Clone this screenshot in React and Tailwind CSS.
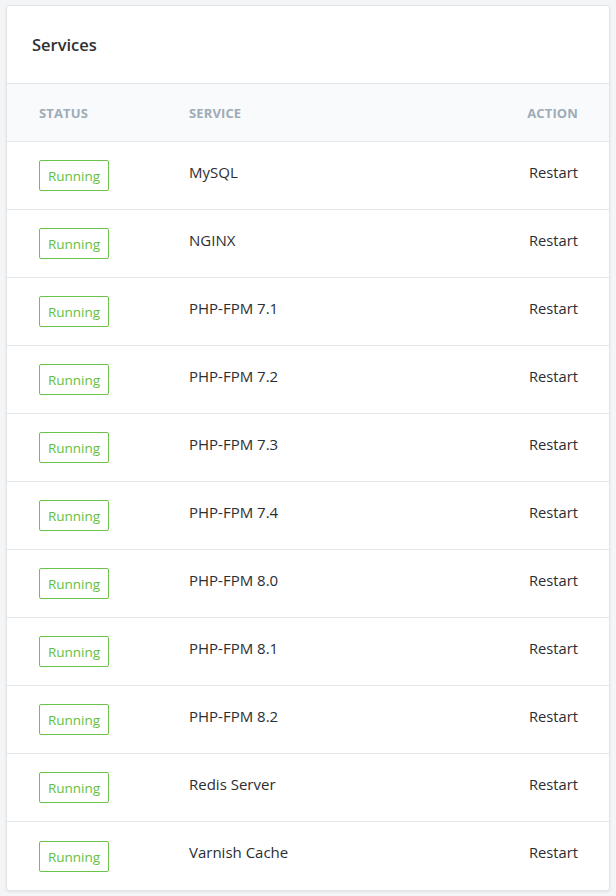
import React from "react";

const services = [
  "MySQL",
  "NGINX",
  "PHP-FPM 7.1",
  "PHP-FPM 7.2",
  "PHP-FPM 7.3",
  "PHP-FPM 7.4",
  "PHP-FPM 8.0",
  "PHP-FPM 8.1",
  "PHP-FPM 8.2",
  "Redis Server",
  "Varnish Cache",
];

export default function App() {
  return (
    <div className="min-h-[896px] bg-[#f4f5f7] pt-[5px] pl-[6px] pr-[6px] pb-[6px]" style={{ fontFamily: '"Open Sans", "Noto Sans", sans-serif' }}>
      <div className="bg-white border border-[#e3e4e6] rounded-[3px] shadow-[0_1px_3px_rgba(0,0,0,0.08)] overflow-hidden">
        <div className="h-[78px] flex items-center px-[25px] pt-[1px] border-b border-[#e4e5e7]">
          <h2 className="text-[16.5px] font-semibold text-[#2f3133]">Services</h2>
        </div>
        <div className="h-[58px] bg-[#f9fafb] flex items-center pl-[32px] pr-[31px] pt-[2px] border-b border-[#e6e7e9] text-[13px] font-bold text-[#9eabb8] tracking-[0.01em]">
          <div className="w-[150px]">STATUS</div>
          <div className="flex-1">SERVICE</div>
          <div>ACTION</div>
        </div>
        {services.map((s, i) => (
          <div
            key={s}
            className={`h-[68px] flex items-center pl-[32px] pr-[31px] ${i < services.length - 1 ? "border-b border-[#e6e7e9]" : ""}`}
          >
            <div className="w-[150px]">
              <span className="inline-flex items-center justify-center w-[70px] h-[31px] border border-[#6cc24a] rounded-[2px] text-[13.5px] text-[#62c141] pt-[2px]">
                Running
              </span>
            </div>
            <div className="flex-1 text-[15px] text-[#2c2e31] pb-[7px]">{s}</div>
            <div className="text-[14.7px] text-[#2c2e31] pb-[7px]">Restart</div>
          </div>
        ))}
      </div>
    </div>
  );
}
